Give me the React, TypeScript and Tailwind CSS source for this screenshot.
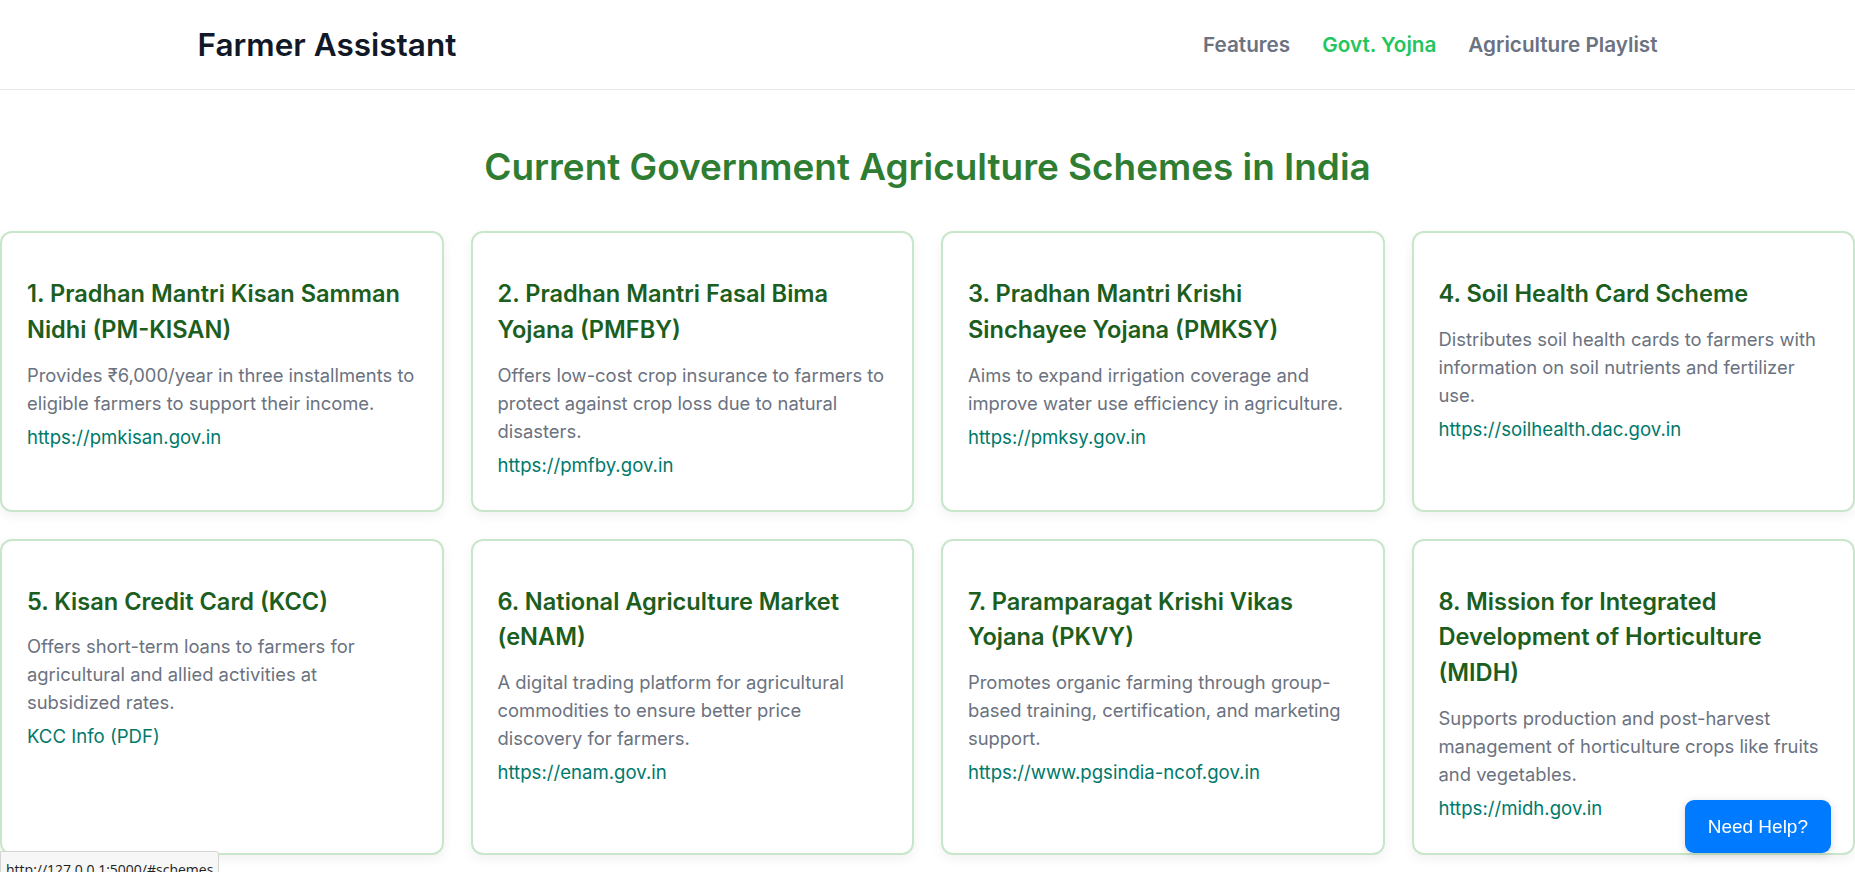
import React from "react";

type Scheme = { title: string; desc: React.ReactNode; link: string };

const schemes: Scheme[] = [
  {
    title: "1. Pradhan Mantri Kisan Samman Nidhi (PM-KISAN)",
    desc: "Provides ₹6,000/year in three installments to eligible farmers to support their income.",
    link: "https://pmkisan.gov.in",
  },
  {
    title: "2. Pradhan Mantri Fasal Bima Yojana (PMFBY)",
    desc: "Offers low-cost crop insurance to farmers to protect against crop loss due to natural disasters.",
    link: "https://pmfby.gov.in",
  },
  {
    title: "3. Pradhan Mantri Krishi Sinchayee Yojana (PMKSY)",
    desc: "Aims to expand irrigation coverage and improve water use efficiency in agriculture.",
    link: "https://pmksy.gov.in",
  },
  {
    title: "4. Soil Health Card Scheme",
    desc: "Distributes soil health cards to farmers with information on soil nutrients and fertilizer use.",
    link: "https://soilhealth.dac.gov.in",
  },
  {
    title: "5. Kisan Credit Card (KCC)",
    desc: (
      <>
        Offers short-term loans to farmers for agricultural and allied activities at
        <br />
        subsidized rates.
      </>
    ),
    link: "KCC Info (PDF)",
  },
  {
    title: "6. National Agriculture Market (eNAM)",
    desc: "A digital trading platform for agricultural commodities to ensure better price discovery for farmers.",
    link: "https://enam.gov.in",
  },
  {
    title: "7. Paramparagat Krishi Vikas Yojana (PKVY)",
    desc: "Promotes organic farming through group-based training, certification, and marketing support.",
    link: "https://www.pgsindia-ncof.gov.in",
  },
  {
    title: "8. Mission for Integrated Development of Horticulture (MIDH)",
    desc: "Supports production and post-harvest management of horticulture crops like fruits and vegetables.",
    link: "https://midh.gov.in",
  },
];

function Card({ s }: { s: Scheme }) {
  return (
    <div className="rounded-[12px] border-2 border-[#c8e6c9] bg-white px-[25px] pt-[43px] pb-[31px] shadow-[0_4px_12px_rgba(0,0,0,0.06)]">
      <h3 className="mb-[13px] text-[23.6px] font-semibold leading-[35.8px] text-[#1b5e20]">{s.title}</h3>
      <p className="text-[18.4px] leading-[28px] text-[#6b7280]">{s.desc}</p>
      <a href="#" className="mt-[6px] block text-[18.6px] leading-[28px] text-[#00796b]">
        {s.link}
      </a>
    </div>
  );
}

export default function App() {
  return (
    <div className="min-h-screen bg-white font-['Inter',sans-serif]">
      <header className="h-[90px] border-b border-[#e5e7eb] bg-white">
        <div className="mx-auto flex h-full w-[1460px] items-center justify-between">
          <div className="text-[31.5px] font-semibold text-[#111827]">Farmer Assistant</div>
          <nav className="flex items-center gap-8 text-[20.7px] font-semibold">
            <a href="#" className="text-[#6b7280]">Features</a>
            <a href="#" className="text-[#22c55e]">Govt. Yojna</a>
            <a href="#" className="text-[#6b7280]">Agriculture Playlist</a>
          </nav>
        </div>
      </header>

      <section>
        <h2 className="mt-[55px] mb-[42px] text-center text-[36.9px] font-semibold leading-[44px] text-[#2e7d32]">
          Current Government Agriculture Schemes in India
        </h2>
        <div className="grid grid-cols-4 gap-[27px]">
          {schemes.map((s) => (
            <Card key={s.title} s={s} />
          ))}
        </div>
      </section>

      <button className="fixed right-[24px] bottom-[19px] rounded-[9px] bg-[#007bff] px-[23px] py-[15px] font-['Liberation_Sans',sans-serif] text-[19px] leading-[23px] text-white shadow-[0_2px_8px_rgba(0,0,0,0.15)]">
        Need Help?
      </button>

      <div className="fixed bottom-[-8px] left-0 rounded-tr-[3px] border border-[#d4d4d4] bg-[#f7f7f7] px-[5px] pt-[8px] pb-[0px] font-['Open_Sans',sans-serif] text-[14px] leading-[19px] text-[#222]">
        http://127.0.0.1:5000/#schemes
      </div>
    </div>
  );
}
